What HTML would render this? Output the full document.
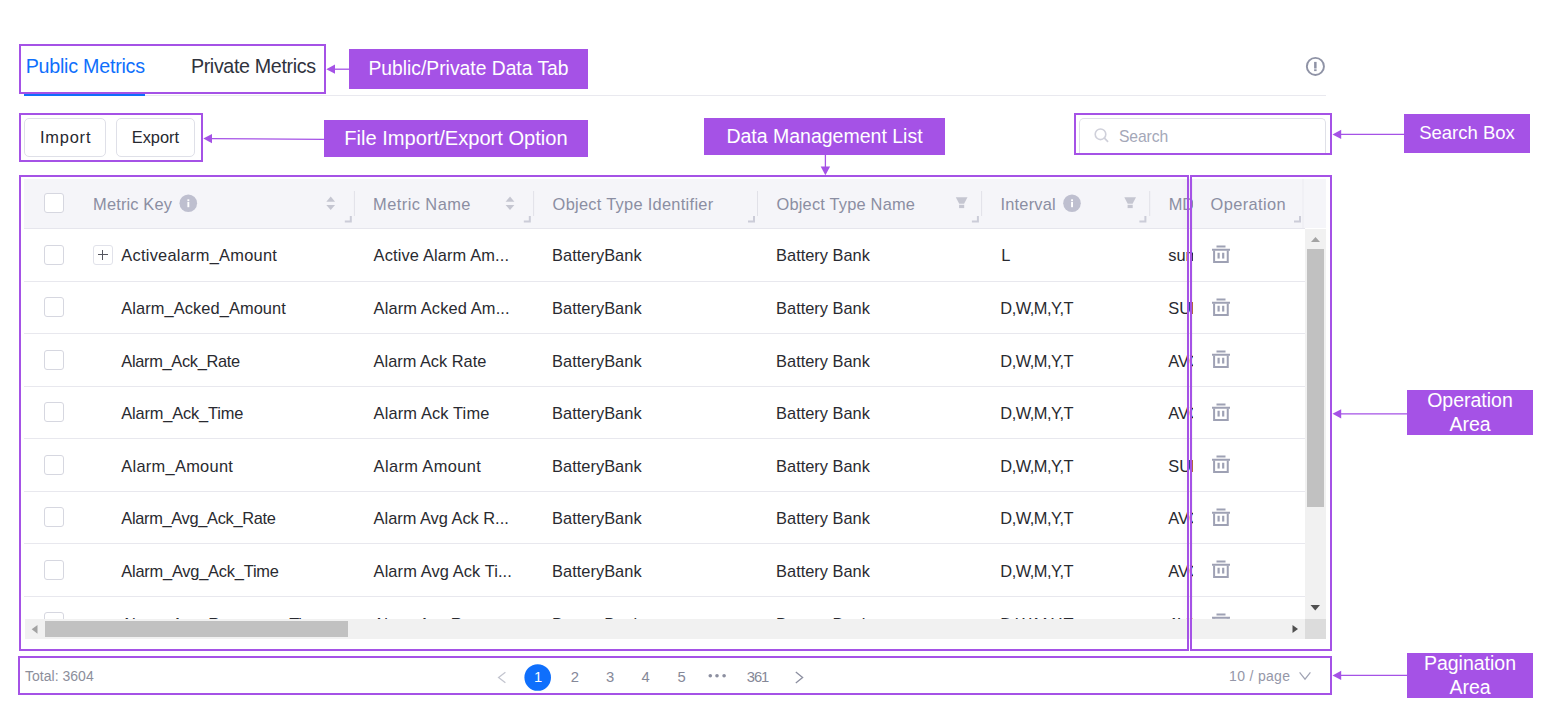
<!DOCTYPE html><html><head><meta charset="utf-8"><style>
html,body{margin:0;padding:0;background:#fff;}
body{width:1541px;height:720px;position:relative;overflow:hidden;font-family:"Liberation Sans", sans-serif;}
.t{position:absolute;white-space:nowrap;line-height:1;}
.lbl{position:absolute;background:#a552e6;color:#fff;display:flex;flex-direction:column;align-items:center;justify-content:center;text-align:center;white-space:nowrap;}
svg{position:absolute;left:0;top:0;overflow:visible;}
</style></head><body>

<div class="t" style="left:25.70px;top:57.32px;font-size:19.7px;color:#0f6ffc;letter-spacing:-0.245px;">Public Metrics</div>
<div class="t" style="left:190.90px;top:57.32px;font-size:19.7px;color:#30333d;letter-spacing:-0.356px;">Private Metrics</div>
<div style="position:absolute;left:24px;top:95px;width:1302px;height:1px;background:#e9e9ef;"></div>
<div style="position:absolute;left:24px;top:94px;width:121px;height:2px;background:#0f6ffc;"></div>
<svg width="1541" height="720" style="pointer-events:none"><circle cx="1315.4" cy="66.4" r="8.55" fill="none" stroke="#8f93a6" stroke-width="1.9"/><rect x="1314.1" y="61.9" width="2.5" height="6.6" fill="#8f93a6"/><rect x="1314.1" y="69.3" width="2.5" height="1.8" fill="#8f93a6"/></svg>
<div style="position:absolute;left:24px;top:118px;width:82px;height:39px;box-sizing:border-box;border:1.25px solid #dfe0e8;border-radius:5px;background:#fff;"></div>
<div style="position:absolute;left:116px;top:118px;width:79px;height:39px;box-sizing:border-box;border:1.25px solid #dfe0e8;border-radius:5px;background:#fff;"></div>
<div class="t" style="left:39.90px;top:129.41px;font-size:16.4px;color:#262830;letter-spacing:0.821px;">Import</div>
<div class="t" style="left:131.70px;top:129.41px;font-size:16.4px;color:#262830;letter-spacing:0.017px;">Export</div>
<div style="position:absolute;left:1079.3px;top:118px;width:246.7px;height:36px;box-sizing:border-box;border:1.25px solid #dfe0e8;border-bottom:none;border-radius:5px 5px 0 0;background:#fff;"></div>
<svg width="1541" height="720"><circle cx="1100.5" cy="134.3" r="5.3" fill="none" stroke="#cfd0da" stroke-width="1.6"/><line x1="1104.4" y1="138.2" x2="1107.6" y2="141.4" stroke="#cfd0da" stroke-width="1.7" stroke-linecap="round"/></svg>
<div class="t" style="left:1119.00px;top:128.91px;font-size:15.7px;color:#a4a7b8;letter-spacing:-0.116px;">Search</div>
<div style="position:absolute;left:24px;top:179px;width:1301.5px;height:49px;background:#f5f5f9;"></div>
<div style="position:absolute;left:24px;top:228px;width:1281px;height:1px;background:#e6e6ed;"></div>
<div style="position:absolute;left:44.2px;top:193px;width:20px;height:20px;box-sizing:border-box;border:1.25px solid #d6d7e0;border-radius:3px;background:#fff;"></div>
<div class="t" style="left:93.10px;top:195.91px;font-size:16.4px;color:#8b8ea2;letter-spacing:0.153px;">Metric Key</div>
<div class="t" style="left:373.10px;top:195.91px;font-size:16.4px;color:#8b8ea2;letter-spacing:0.442px;">Metric Name</div>
<div class="t" style="left:552.60px;top:195.91px;font-size:16.4px;color:#8b8ea2;letter-spacing:0.285px;">Object Type Identifier</div>
<div class="t" style="left:776.50px;top:195.91px;font-size:16.4px;color:#8b8ea2;letter-spacing:0.199px;">Object Type Name</div>
<div class="t" style="left:1000.40px;top:195.91px;font-size:16.4px;color:#8b8ea2;letter-spacing:0.227px;">Interval</div>
<div style="position:absolute;left:1160px;top:179px;width:33px;height:49px;overflow:hidden;">
<div class="t" style="left:8.70px;top:16.91px;font-size:16.4px;color:#8b8ea2;">MDCalc</div>
</div>
<div class="t" style="left:1210.60px;top:195.91px;font-size:16.4px;color:#8b8ea2;letter-spacing:0.379px;">Operation</div>
<div style="position:absolute;left:24px;top:229px;width:1281px;height:390px;overflow:hidden;">
<div style="position:absolute;left:0;top:51.50px;width:1281px;height:1px;background:#e8e8ee;"></div>
<div style="position:absolute;left:20.2px;top:15.50px;width:20px;height:20px;box-sizing:border-box;border:1.25px solid #d6d7e0;border-radius:3px;background:#fff;"></div>
<div style="position:absolute;left:68.7px;top:15.80px;width:20px;height:20px;box-sizing:border-box;border:1.25px solid #e1e2ea;border-radius:3px;background:#fff;"></div>
<div style="position:absolute;left:73.5px;top:25.00px;width:10.5px;height:1.4px;background:#55565f;"></div>
<div style="position:absolute;left:78.05px;top:20.50px;width:1.4px;height:10.5px;background:#55565f;"></div>
<div class="t" style="left:97.30px;top:18.31px;font-size:16.4px;color:#292a30;letter-spacing:0.255px;">Activealarm_Amount</div>
<div class="t" style="left:349.60px;top:18.31px;font-size:16.4px;color:#292a30;letter-spacing:0.145px;">Active Alarm Am...</div>
<div class="t" style="left:528.10px;top:18.31px;font-size:16.4px;color:#292a30;letter-spacing:0.021px;">BatteryBank</div>
<div class="t" style="left:752.10px;top:18.31px;font-size:16.4px;color:#292a30;">Battery Bank</div>
<div class="t" style="left:977.30px;top:18.31px;font-size:16.4px;color:#292a30;">L</div>
<div class="t" style="left:1144.30px;top:18.31px;font-size:16.4px;color:#292a30;">sum</div>
<div style="position:absolute;left:0;top:104.00px;width:1281px;height:1px;background:#e8e8ee;"></div>
<div style="position:absolute;left:20.2px;top:68.00px;width:20px;height:20px;box-sizing:border-box;border:1.25px solid #d6d7e0;border-radius:3px;background:#fff;"></div>
<div class="t" style="left:97.30px;top:70.91px;font-size:16.4px;color:#292a30;letter-spacing:0.084px;">Alarm_Acked_Amount</div>
<div class="t" style="left:349.60px;top:70.91px;font-size:16.4px;color:#292a30;letter-spacing:0.128px;">Alarm Acked Am...</div>
<div class="t" style="left:528.10px;top:70.91px;font-size:16.4px;color:#292a30;letter-spacing:0.021px;">BatteryBank</div>
<div class="t" style="left:752.10px;top:70.91px;font-size:16.4px;color:#292a30;">Battery Bank</div>
<div class="t" style="left:976.30px;top:70.91px;font-size:16.4px;color:#292a30;letter-spacing:-0.486px;">D,W,M,Y,T</div>
<div class="t" style="left:1144.30px;top:70.91px;font-size:16.4px;color:#292a30;">SUM</div>
<div style="position:absolute;left:0;top:156.50px;width:1281px;height:1px;background:#e8e8ee;"></div>
<div style="position:absolute;left:20.2px;top:120.50px;width:20px;height:20px;box-sizing:border-box;border:1.25px solid #d6d7e0;border-radius:3px;background:#fff;"></div>
<div class="t" style="left:97.30px;top:123.51px;font-size:16.4px;color:#292a30;letter-spacing:-0.312px;">Alarm_Ack_Rate</div>
<div class="t" style="left:349.60px;top:123.51px;font-size:16.4px;color:#292a30;letter-spacing:-0.018px;">Alarm Ack Rate</div>
<div class="t" style="left:528.10px;top:123.51px;font-size:16.4px;color:#292a30;letter-spacing:0.021px;">BatteryBank</div>
<div class="t" style="left:752.10px;top:123.51px;font-size:16.4px;color:#292a30;">Battery Bank</div>
<div class="t" style="left:976.30px;top:123.51px;font-size:16.4px;color:#292a30;letter-spacing:-0.486px;">D,W,M,Y,T</div>
<div class="t" style="left:1144.30px;top:123.51px;font-size:16.4px;color:#292a30;">AVG</div>
<div style="position:absolute;left:0;top:209.00px;width:1281px;height:1px;background:#e8e8ee;"></div>
<div style="position:absolute;left:20.2px;top:173.00px;width:20px;height:20px;box-sizing:border-box;border:1.25px solid #d6d7e0;border-radius:3px;background:#fff;"></div>
<div class="t" style="left:97.30px;top:176.11px;font-size:16.4px;color:#292a30;letter-spacing:-0.158px;">Alarm_Ack_Time</div>
<div class="t" style="left:349.60px;top:176.11px;font-size:16.4px;color:#292a30;letter-spacing:0.144px;">Alarm Ack Time</div>
<div class="t" style="left:528.10px;top:176.11px;font-size:16.4px;color:#292a30;letter-spacing:0.021px;">BatteryBank</div>
<div class="t" style="left:752.10px;top:176.11px;font-size:16.4px;color:#292a30;">Battery Bank</div>
<div class="t" style="left:976.30px;top:176.11px;font-size:16.4px;color:#292a30;letter-spacing:-0.486px;">D,W,M,Y,T</div>
<div class="t" style="left:1144.30px;top:176.11px;font-size:16.4px;color:#292a30;">AVG</div>
<div style="position:absolute;left:0;top:261.50px;width:1281px;height:1px;background:#e8e8ee;"></div>
<div style="position:absolute;left:20.2px;top:225.50px;width:20px;height:20px;box-sizing:border-box;border:1.25px solid #d6d7e0;border-radius:3px;background:#fff;"></div>
<div class="t" style="left:97.30px;top:228.71px;font-size:16.4px;color:#292a30;letter-spacing:0.286px;">Alarm_Amount</div>
<div class="t" style="left:349.60px;top:228.71px;font-size:16.4px;color:#292a30;letter-spacing:0.383px;">Alarm Amount</div>
<div class="t" style="left:528.10px;top:228.71px;font-size:16.4px;color:#292a30;letter-spacing:0.021px;">BatteryBank</div>
<div class="t" style="left:752.10px;top:228.71px;font-size:16.4px;color:#292a30;">Battery Bank</div>
<div class="t" style="left:976.30px;top:228.71px;font-size:16.4px;color:#292a30;letter-spacing:-0.486px;">D,W,M,Y,T</div>
<div class="t" style="left:1144.30px;top:228.71px;font-size:16.4px;color:#292a30;">SUM</div>
<div style="position:absolute;left:0;top:314.00px;width:1281px;height:1px;background:#e8e8ee;"></div>
<div style="position:absolute;left:20.2px;top:278.00px;width:20px;height:20px;box-sizing:border-box;border:1.25px solid #d6d7e0;border-radius:3px;background:#fff;"></div>
<div class="t" style="left:97.30px;top:281.31px;font-size:16.4px;color:#292a30;letter-spacing:-0.319px;">Alarm_Avg_Ack_Rate</div>
<div class="t" style="left:349.60px;top:281.31px;font-size:16.4px;color:#292a30;letter-spacing:-0.016px;">Alarm Avg Ack R...</div>
<div class="t" style="left:528.10px;top:281.31px;font-size:16.4px;color:#292a30;letter-spacing:0.021px;">BatteryBank</div>
<div class="t" style="left:752.10px;top:281.31px;font-size:16.4px;color:#292a30;">Battery Bank</div>
<div class="t" style="left:976.30px;top:281.31px;font-size:16.4px;color:#292a30;letter-spacing:-0.486px;">D,W,M,Y,T</div>
<div class="t" style="left:1144.30px;top:281.31px;font-size:16.4px;color:#292a30;">AVG</div>
<div style="position:absolute;left:0;top:366.50px;width:1281px;height:1px;background:#e8e8ee;"></div>
<div style="position:absolute;left:20.2px;top:330.50px;width:20px;height:20px;box-sizing:border-box;border:1.25px solid #d6d7e0;border-radius:3px;background:#fff;"></div>
<div class="t" style="left:97.30px;top:333.91px;font-size:16.4px;color:#292a30;letter-spacing:-0.216px;">Alarm_Avg_Ack_Time</div>
<div class="t" style="left:349.60px;top:333.91px;font-size:16.4px;color:#292a30;letter-spacing:0.101px;">Alarm Avg Ack Ti...</div>
<div class="t" style="left:528.10px;top:333.91px;font-size:16.4px;color:#292a30;letter-spacing:0.021px;">BatteryBank</div>
<div class="t" style="left:752.10px;top:333.91px;font-size:16.4px;color:#292a30;">Battery Bank</div>
<div class="t" style="left:976.30px;top:333.91px;font-size:16.4px;color:#292a30;letter-spacing:-0.486px;">D,W,M,Y,T</div>
<div class="t" style="left:1144.30px;top:333.91px;font-size:16.4px;color:#292a30;">AVG</div>
<div style="position:absolute;left:0;top:419.00px;width:1281px;height:1px;background:#e8e8ee;"></div>
<div style="position:absolute;left:20.2px;top:383.00px;width:20px;height:20px;box-sizing:border-box;border:1.25px solid #d6d7e0;border-radius:3px;background:#fff;"></div>
<div class="t" style="left:97.30px;top:386.51px;font-size:16.4px;color:#292a30;letter-spacing:-0.214px;">Alarm_Avg_Response_Time</div>
<div class="t" style="left:349.60px;top:386.51px;font-size:16.4px;color:#292a30;letter-spacing:-0.173px;">Alarm Avg Respo...</div>
<div class="t" style="left:528.10px;top:386.51px;font-size:16.4px;color:#292a30;letter-spacing:0.021px;">BatteryBank</div>
<div class="t" style="left:752.10px;top:386.51px;font-size:16.4px;color:#292a30;">Battery Bank</div>
<div class="t" style="left:976.30px;top:386.51px;font-size:16.4px;color:#292a30;letter-spacing:-0.486px;">D,W,M,Y,T</div>
<div class="t" style="left:1144.30px;top:386.51px;font-size:16.4px;color:#292a30;">AVG</div>
</div>
<div style="position:absolute;left:1193px;top:229px;width:112px;height:390px;overflow:hidden;background:#fff;">
<div style="position:absolute;left:0;top:51.50px;width:112px;height:1px;background:#e8e8ee;"></div>
<svg style="left:12px;top:11.00px" width="35" height="30" viewBox="0 0 35 30"><rect x="11.5" y="5.5" width="9" height="2" fill="#9ea1b4"/><rect x="7" y="8.75" width="18" height="2" fill="#9ea1b4"/><path d="M8.1 10.5 H10.1 V21 H21.75 V10.5 H23.75 V23 H8.1 Z" fill="#9ea1b4"/><rect x="12.5" y="12.75" width="2.2" height="5.8" fill="#9ea1b4"/><rect x="17.1" y="12.75" width="2.2" height="5.8" fill="#9ea1b4"/></svg>
<div style="position:absolute;left:0;top:104.00px;width:112px;height:1px;background:#e8e8ee;"></div>
<svg style="left:12px;top:63.50px" width="35" height="30" viewBox="0 0 35 30"><rect x="11.5" y="5.5" width="9" height="2" fill="#9ea1b4"/><rect x="7" y="8.75" width="18" height="2" fill="#9ea1b4"/><path d="M8.1 10.5 H10.1 V21 H21.75 V10.5 H23.75 V23 H8.1 Z" fill="#9ea1b4"/><rect x="12.5" y="12.75" width="2.2" height="5.8" fill="#9ea1b4"/><rect x="17.1" y="12.75" width="2.2" height="5.8" fill="#9ea1b4"/></svg>
<div style="position:absolute;left:0;top:156.50px;width:112px;height:1px;background:#e8e8ee;"></div>
<svg style="left:12px;top:116.00px" width="35" height="30" viewBox="0 0 35 30"><rect x="11.5" y="5.5" width="9" height="2" fill="#9ea1b4"/><rect x="7" y="8.75" width="18" height="2" fill="#9ea1b4"/><path d="M8.1 10.5 H10.1 V21 H21.75 V10.5 H23.75 V23 H8.1 Z" fill="#9ea1b4"/><rect x="12.5" y="12.75" width="2.2" height="5.8" fill="#9ea1b4"/><rect x="17.1" y="12.75" width="2.2" height="5.8" fill="#9ea1b4"/></svg>
<div style="position:absolute;left:0;top:209.00px;width:112px;height:1px;background:#e8e8ee;"></div>
<svg style="left:12px;top:168.50px" width="35" height="30" viewBox="0 0 35 30"><rect x="11.5" y="5.5" width="9" height="2" fill="#9ea1b4"/><rect x="7" y="8.75" width="18" height="2" fill="#9ea1b4"/><path d="M8.1 10.5 H10.1 V21 H21.75 V10.5 H23.75 V23 H8.1 Z" fill="#9ea1b4"/><rect x="12.5" y="12.75" width="2.2" height="5.8" fill="#9ea1b4"/><rect x="17.1" y="12.75" width="2.2" height="5.8" fill="#9ea1b4"/></svg>
<div style="position:absolute;left:0;top:261.50px;width:112px;height:1px;background:#e8e8ee;"></div>
<svg style="left:12px;top:221.00px" width="35" height="30" viewBox="0 0 35 30"><rect x="11.5" y="5.5" width="9" height="2" fill="#9ea1b4"/><rect x="7" y="8.75" width="18" height="2" fill="#9ea1b4"/><path d="M8.1 10.5 H10.1 V21 H21.75 V10.5 H23.75 V23 H8.1 Z" fill="#9ea1b4"/><rect x="12.5" y="12.75" width="2.2" height="5.8" fill="#9ea1b4"/><rect x="17.1" y="12.75" width="2.2" height="5.8" fill="#9ea1b4"/></svg>
<div style="position:absolute;left:0;top:314.00px;width:112px;height:1px;background:#e8e8ee;"></div>
<svg style="left:12px;top:273.50px" width="35" height="30" viewBox="0 0 35 30"><rect x="11.5" y="5.5" width="9" height="2" fill="#9ea1b4"/><rect x="7" y="8.75" width="18" height="2" fill="#9ea1b4"/><path d="M8.1 10.5 H10.1 V21 H21.75 V10.5 H23.75 V23 H8.1 Z" fill="#9ea1b4"/><rect x="12.5" y="12.75" width="2.2" height="5.8" fill="#9ea1b4"/><rect x="17.1" y="12.75" width="2.2" height="5.8" fill="#9ea1b4"/></svg>
<div style="position:absolute;left:0;top:366.50px;width:112px;height:1px;background:#e8e8ee;"></div>
<svg style="left:12px;top:326.00px" width="35" height="30" viewBox="0 0 35 30"><rect x="11.5" y="5.5" width="9" height="2" fill="#9ea1b4"/><rect x="7" y="8.75" width="18" height="2" fill="#9ea1b4"/><path d="M8.1 10.5 H10.1 V21 H21.75 V10.5 H23.75 V23 H8.1 Z" fill="#9ea1b4"/><rect x="12.5" y="12.75" width="2.2" height="5.8" fill="#9ea1b4"/><rect x="17.1" y="12.75" width="2.2" height="5.8" fill="#9ea1b4"/></svg>
<div style="position:absolute;left:0;top:419.00px;width:112px;height:1px;background:#e8e8ee;"></div>
<svg style="left:12px;top:378.50px" width="35" height="30" viewBox="0 0 35 30"><rect x="11.5" y="5.5" width="9" height="2" fill="#9ea1b4"/><rect x="7" y="8.75" width="18" height="2" fill="#9ea1b4"/><path d="M8.1 10.5 H10.1 V21 H21.75 V10.5 H23.75 V23 H8.1 Z" fill="#9ea1b4"/><rect x="12.5" y="12.75" width="2.2" height="5.8" fill="#9ea1b4"/><rect x="17.1" y="12.75" width="2.2" height="5.8" fill="#9ea1b4"/></svg>
</div>
<div style="position:absolute;left:1181px;top:179px;width:12px;height:440px;background:linear-gradient(to right, rgba(0,0,0,0), rgba(0,0,0,0.035));"></div>
<svg width="1541" height="720"><rect x="353.9" y="191" width="1" height="25" fill="#e1e1e8"/><rect x="533.1" y="191" width="1" height="25" fill="#e1e1e8"/><rect x="757.0" y="191" width="1" height="25" fill="#e1e1e8"/><rect x="981.1" y="191" width="1" height="25" fill="#e1e1e8"/><rect x="1149.2" y="191" width="1" height="25" fill="#e1e1e8"/><path d="M344.8 220.6 H349.8 V216 H351.8 V222.6 H344.8 Z" fill="#cbccd8"/><path d="M523.8 220.6 H528.8 V216 H530.8 V222.6 H523.8 Z" fill="#cbccd8"/><path d="M748.0 220.6 H753.0 V216 H755.0 V222.6 H748.0 Z" fill="#cbccd8"/><path d="M971.9 220.6 H976.9 V216 H978.9 V222.6 H971.9 Z" fill="#cbccd8"/><path d="M1139.4 220.6 H1144.4 V216 H1146.4 V222.6 H1139.4 Z" fill="#cbccd8"/><path d="M1294.0 220.6 H1299.0 V216 H1301.0 V222.6 H1294.0 Z" fill="#cbccd8"/><rect x="1302.5" y="179" width="1" height="49" fill="#ececf2"/><circle cx="188.3" cy="203.2" r="8.8" fill="#bebfcf"/><rect x="187.4" y="199.3" width="1.9" height="1.9" fill="#fff"/><rect x="187.4" y="202" width="1.9" height="5.2" fill="#fff"/><circle cx="1072" cy="203.2" r="8.8" fill="#bebfcf"/><rect x="1071.1" y="199.3" width="1.9" height="1.9" fill="#fff"/><rect x="1071.1" y="202" width="1.9" height="5.2" fill="#fff"/><path d="M326.3 201.7 L330.7 196.6 L335.1 201.7 Z" fill="#c5c6d1"/><path d="M326.3 204.9 L330.7 209.9 L335.1 204.9 Z" fill="#c5c6d1"/><path d="M505.6 201.7 L510.0 196.6 L514.4 201.7 Z" fill="#c5c6d1"/><path d="M505.6 204.9 L510.0 209.9 L514.4 204.9 Z" fill="#c5c6d1"/><path d="M955.8 197.3 H967.5 L964.1 203.8 H959.2 Z" fill="#c5c6d1"/><rect x="959.1" y="204.8" width="5.1" height="3.3" fill="#c5c6d1"/><path d="M1124.3 197.3 H1136.0 L1132.6 203.8 H1127.7 Z" fill="#c5c6d1"/><rect x="1127.6" y="204.8" width="5.1" height="3.3" fill="#c5c6d1"/></svg>
<div style="position:absolute;left:1305px;top:228.5px;width:20.6px;height:390.5px;background:#f1f1f1;"></div>
<div style="position:absolute;left:1307px;top:249.4px;width:17px;height:257.6px;background:#c1c1c1;"></div>
<div style="position:absolute;left:24.7px;top:619px;width:1280.3px;height:20px;background:#f1f1f1;"></div>
<div style="position:absolute;left:45px;top:620.8px;width:302.6px;height:16.7px;background:#c1c1c1;"></div>
<div style="position:absolute;left:1305px;top:618.75px;width:20.75px;height:20px;background:#dcdcdc;"></div>
<svg width="1541" height="720"><path d="M1311 242 L1315.5 236.9 L1320 242 Z" fill="#a3a3a3"/><path d="M1310.5 605 L1315.25 610.5 L1320 605 Z" fill="#505050"/><path d="M37.5 625 L31.7 629.35 L37.5 633.7 Z" fill="#a3a3a3"/><path d="M1292.5 625 L1298 629 L1292.5 633 Z" fill="#505050"/></svg>
<div class="t" style="left:25.00px;top:669.35px;font-size:14.0px;color:#8c8e9b;letter-spacing:0.019px;">Total: 3604</div>
<svg width="1541" height="720"><circle cx="537.7" cy="677.5" r="13.3" fill="#0f6ffc"/><path d="M505.4 672.3 L498.6 677.5 L505.4 682.7" fill="none" stroke="#c3c5cf" stroke-width="1.3"/><path d="M795.8 672.1 L802.6 677.5 L795.8 682.9" fill="none" stroke="#8c8fa0" stroke-width="1.3"/><circle cx="710.3" cy="675.7" r="1.8" fill="#8c8fa0"/><circle cx="717" cy="675.7" r="1.8" fill="#8c8fa0"/><circle cx="724.1" cy="675.7" r="1.8" fill="#8c8fa0"/><path d="M1299.6 672.3 L1305 679.2 L1310.4 672.3" fill="none" stroke="#a0a3b3" stroke-width="1.2"/></svg>
<div class="t" style="left:534.10px;top:670.47px;font-size:14.8px;color:#ffffff;letter-spacing:-2.100px;">1</div>
<div class="t" style="left:570.80px;top:670.47px;font-size:14.8px;color:#858898;">2</div>
<div class="t" style="left:606.00px;top:670.47px;font-size:14.8px;color:#858898;">3</div>
<div class="t" style="left:641.50px;top:670.47px;font-size:14.8px;color:#858898;">4</div>
<div class="t" style="left:677.50px;top:670.47px;font-size:14.8px;color:#858898;">5</div>
<div class="t" style="left:746.80px;top:670.47px;font-size:14.8px;color:#858898;letter-spacing:-1.129px;">361</div>
<div class="t" style="left:1229.10px;top:669.25px;font-size:14.0px;color:#9597a8;letter-spacing:0.313px;">10 / page</div>
<div style="position:absolute;left:19px;top:44px;width:307px;height:50px;box-sizing:border-box;border:2px solid #a552e6;"></div>
<div style="position:absolute;left:19px;top:113px;width:184px;height:49px;box-sizing:border-box;border:2px solid #a552e6;"></div>
<div style="position:absolute;left:1074px;top:113px;width:258px;height:42px;box-sizing:border-box;border:2px solid #a552e6;"></div>
<div style="position:absolute;left:19px;top:175px;width:1170px;height:476px;box-sizing:border-box;border:2px solid #a552e6;"></div>
<div style="position:absolute;left:1190px;top:175px;width:142px;height:476px;box-sizing:border-box;border:2px solid #a552e6;"></div>
<div style="position:absolute;left:18px;top:656px;width:1314px;height:39px;box-sizing:border-box;border:2px solid #a552e6;"></div>
<div class="lbl" style="left:349px;top:49px;width:239px;height:40px;font-size:19.3px;line-height:1;">Public/Private Data Tab</div>
<div class="lbl" style="left:324px;top:120px;width:264px;height:37px;font-size:20.1px;line-height:1;">File Import/Export Option</div>
<div class="lbl" style="left:704px;top:118px;width:241px;height:37px;font-size:19.5px;line-height:1;">Data Management List</div>
<div class="lbl" style="left:1404px;top:114px;width:126px;height:39px;font-size:18.5px;line-height:1;">Search Box</div>
<div class="lbl" style="left:1407px;top:390px;width:126px;height:45px;font-size:19.5px;line-height:23.5px;">Operation<br>Area</div>
<div class="lbl" style="left:1407px;top:653px;width:126px;height:45px;font-size:19.5px;line-height:23.5px;">Pagination<br>Area</div>
<svg width="1541" height="720"><line x1="349" y1="69.2" x2="334" y2="69.2" stroke="#a552e6" stroke-width="1.3"/><path d="M326.3 69.2 L335 64.60000000000001 L335 73.8 Z" fill="#a552e6"/><line x1="324" y1="139.4" x2="211" y2="138.6" stroke="#a552e6" stroke-width="1.3"/><path d="M203.3 138.6 L212 134.0 L212 143.2 Z" fill="#a552e6"/><line x1="1404" y1="134.4" x2="1340.2" y2="134.4" stroke="#a552e6" stroke-width="1.3"/><path d="M1332.5 134.4 L1341.2 129.8 L1341.2 139.0 Z" fill="#a552e6"/><line x1="1407" y1="413.8" x2="1340.2" y2="413.8" stroke="#a552e6" stroke-width="1.3"/><path d="M1332.5 413.8 L1341.2 409.2 L1341.2 418.40000000000003 Z" fill="#a552e6"/><line x1="1407" y1="675.4" x2="1340.2" y2="675.4" stroke="#a552e6" stroke-width="1.3"/><path d="M1332.5 675.4 L1341.2 670.8 L1341.2 680.0 Z" fill="#a552e6"/><line x1="825.4" y1="155" x2="825.4" y2="167" stroke="#a552e6" stroke-width="1.3"/><path d="M825.4 175.3 L820.7 166.6 L830.1 166.6 Z" fill="#a552e6"/></svg>
</body></html>
